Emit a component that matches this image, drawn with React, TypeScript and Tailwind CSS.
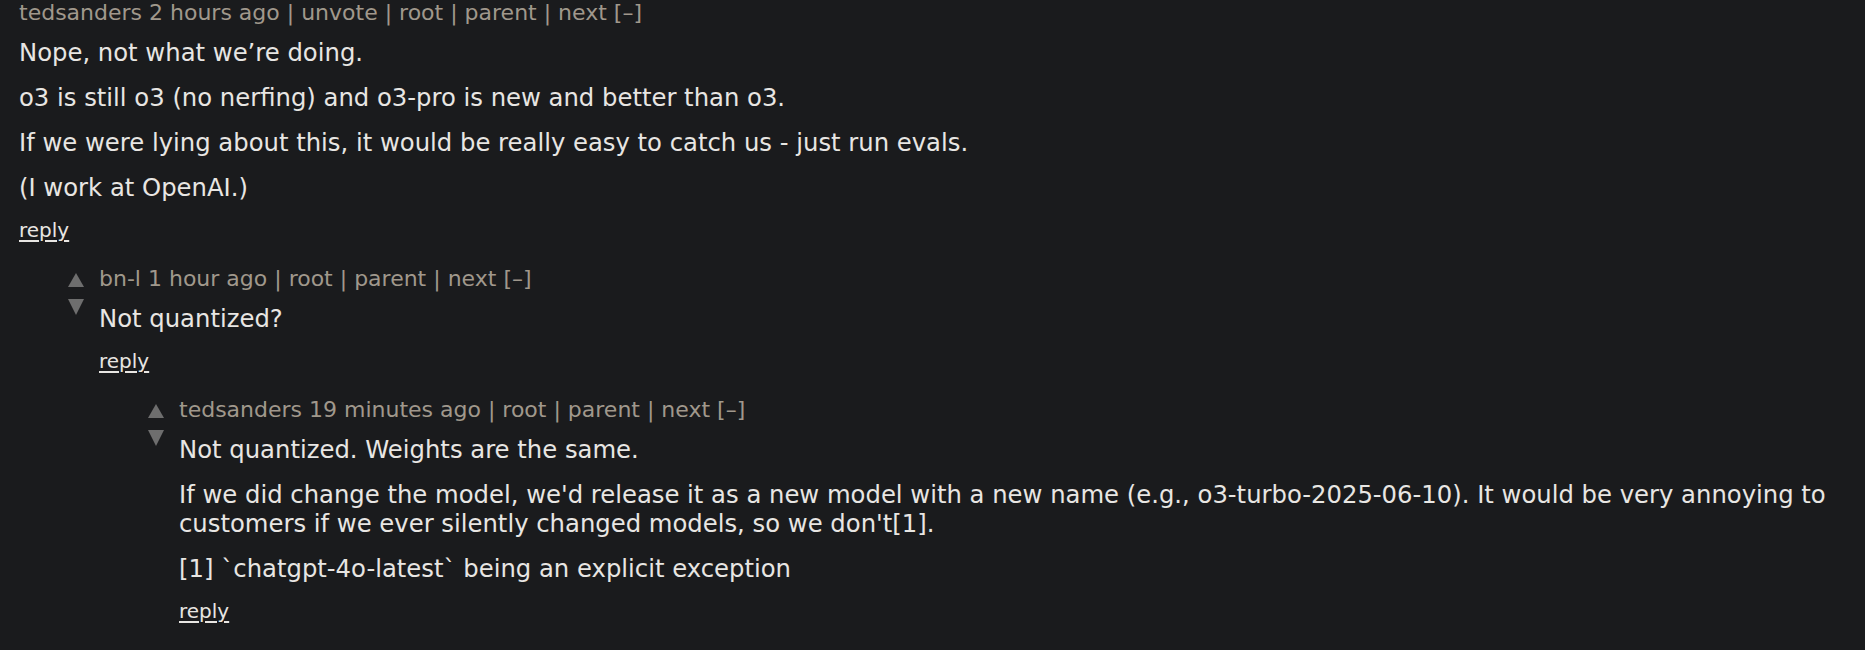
const font = { fontFamily: '"DejaVu Sans", Verdana, sans-serif' };

function Arrows() {
  return (
    <div className="flex w-[16px] shrink-0 flex-col gap-[12px] pt-[7px]">
      <svg width="16" height="14" viewBox="0 0 16 14">
        <polygon points="8,0 16,14 0,14" fill="#6e6e6e" />
      </svg>
      <svg width="16" height="16" viewBox="0 0 16 16">
        <polygon points="0,0 16,0 8,16" fill="#6e6e6e" />
      </svg>
    </div>
  );
}

interface CommentProps {
  level: number;
  head: string;
  paras: string[];
  arrows?: boolean;
}

function Comment({ level, head, paras, arrows = true }: CommentProps) {
  const indent = ["pl-[19px]", "pl-[68px]", "pl-[148px]"][level];
  return (
    <div className={`flex gap-[15px] ${indent} pr-[20px]`}>
      {arrows && <Arrows />}
      <div className="flex-1">
        <div className="text-[22px] leading-[26px] text-[#a0988c]">{head}</div>
        <div className="mt-[12px] flex flex-col gap-[16px] text-[24.3px] leading-[29px] text-[#e8e6e3]">
          {paras.map((p, i) => (
            <p key={i}>{p}</p>
          ))}
        </div>
        <div className="mt-[16px] text-[20px] leading-[24px] text-[#e8e6e3]">
          <span className="underline underline-offset-[3px]">reply</span>
        </div>
      </div>
    </div>
  );
}

export default function App() {
  return (
    <div className="min-h-[650px] w-full bg-[#1a1b1d]" style={font}>
      <div className="flex flex-col gap-[24px]">
        <Comment
          level={0}
          arrows={false}
          head="tedsanders 2 hours ago | unvote | root | parent | next [–]"
          paras={[
            "Nope, not what we’re doing.",
            "o3 is still o3 (no nerfing) and o3-pro is new and better than o3.",
            "If we were lying about this, it would be really easy to catch us - just run evals.",
            "(I work at OpenAI.)",
          ]}
        />
        <Comment
          level={1}
          head="bn-l 1 hour ago | root | parent | next [–]"
          paras={["Not quantized?"]}
        />
        <Comment
          level={2}
          head="tedsanders 19 minutes ago | root | parent | next [–]"
          paras={[
            "Not quantized. Weights are the same.",
            "If we did change the model, we'd release it as a new model with a new name (e.g., o3-turbo-2025-06-10). It would be very annoying to customers if we ever silently changed models, so we don't[1].",
            "[1] `chatgpt-4o-latest` being an explicit exception",
          ]}
        />
      </div>
    </div>
  );
}
